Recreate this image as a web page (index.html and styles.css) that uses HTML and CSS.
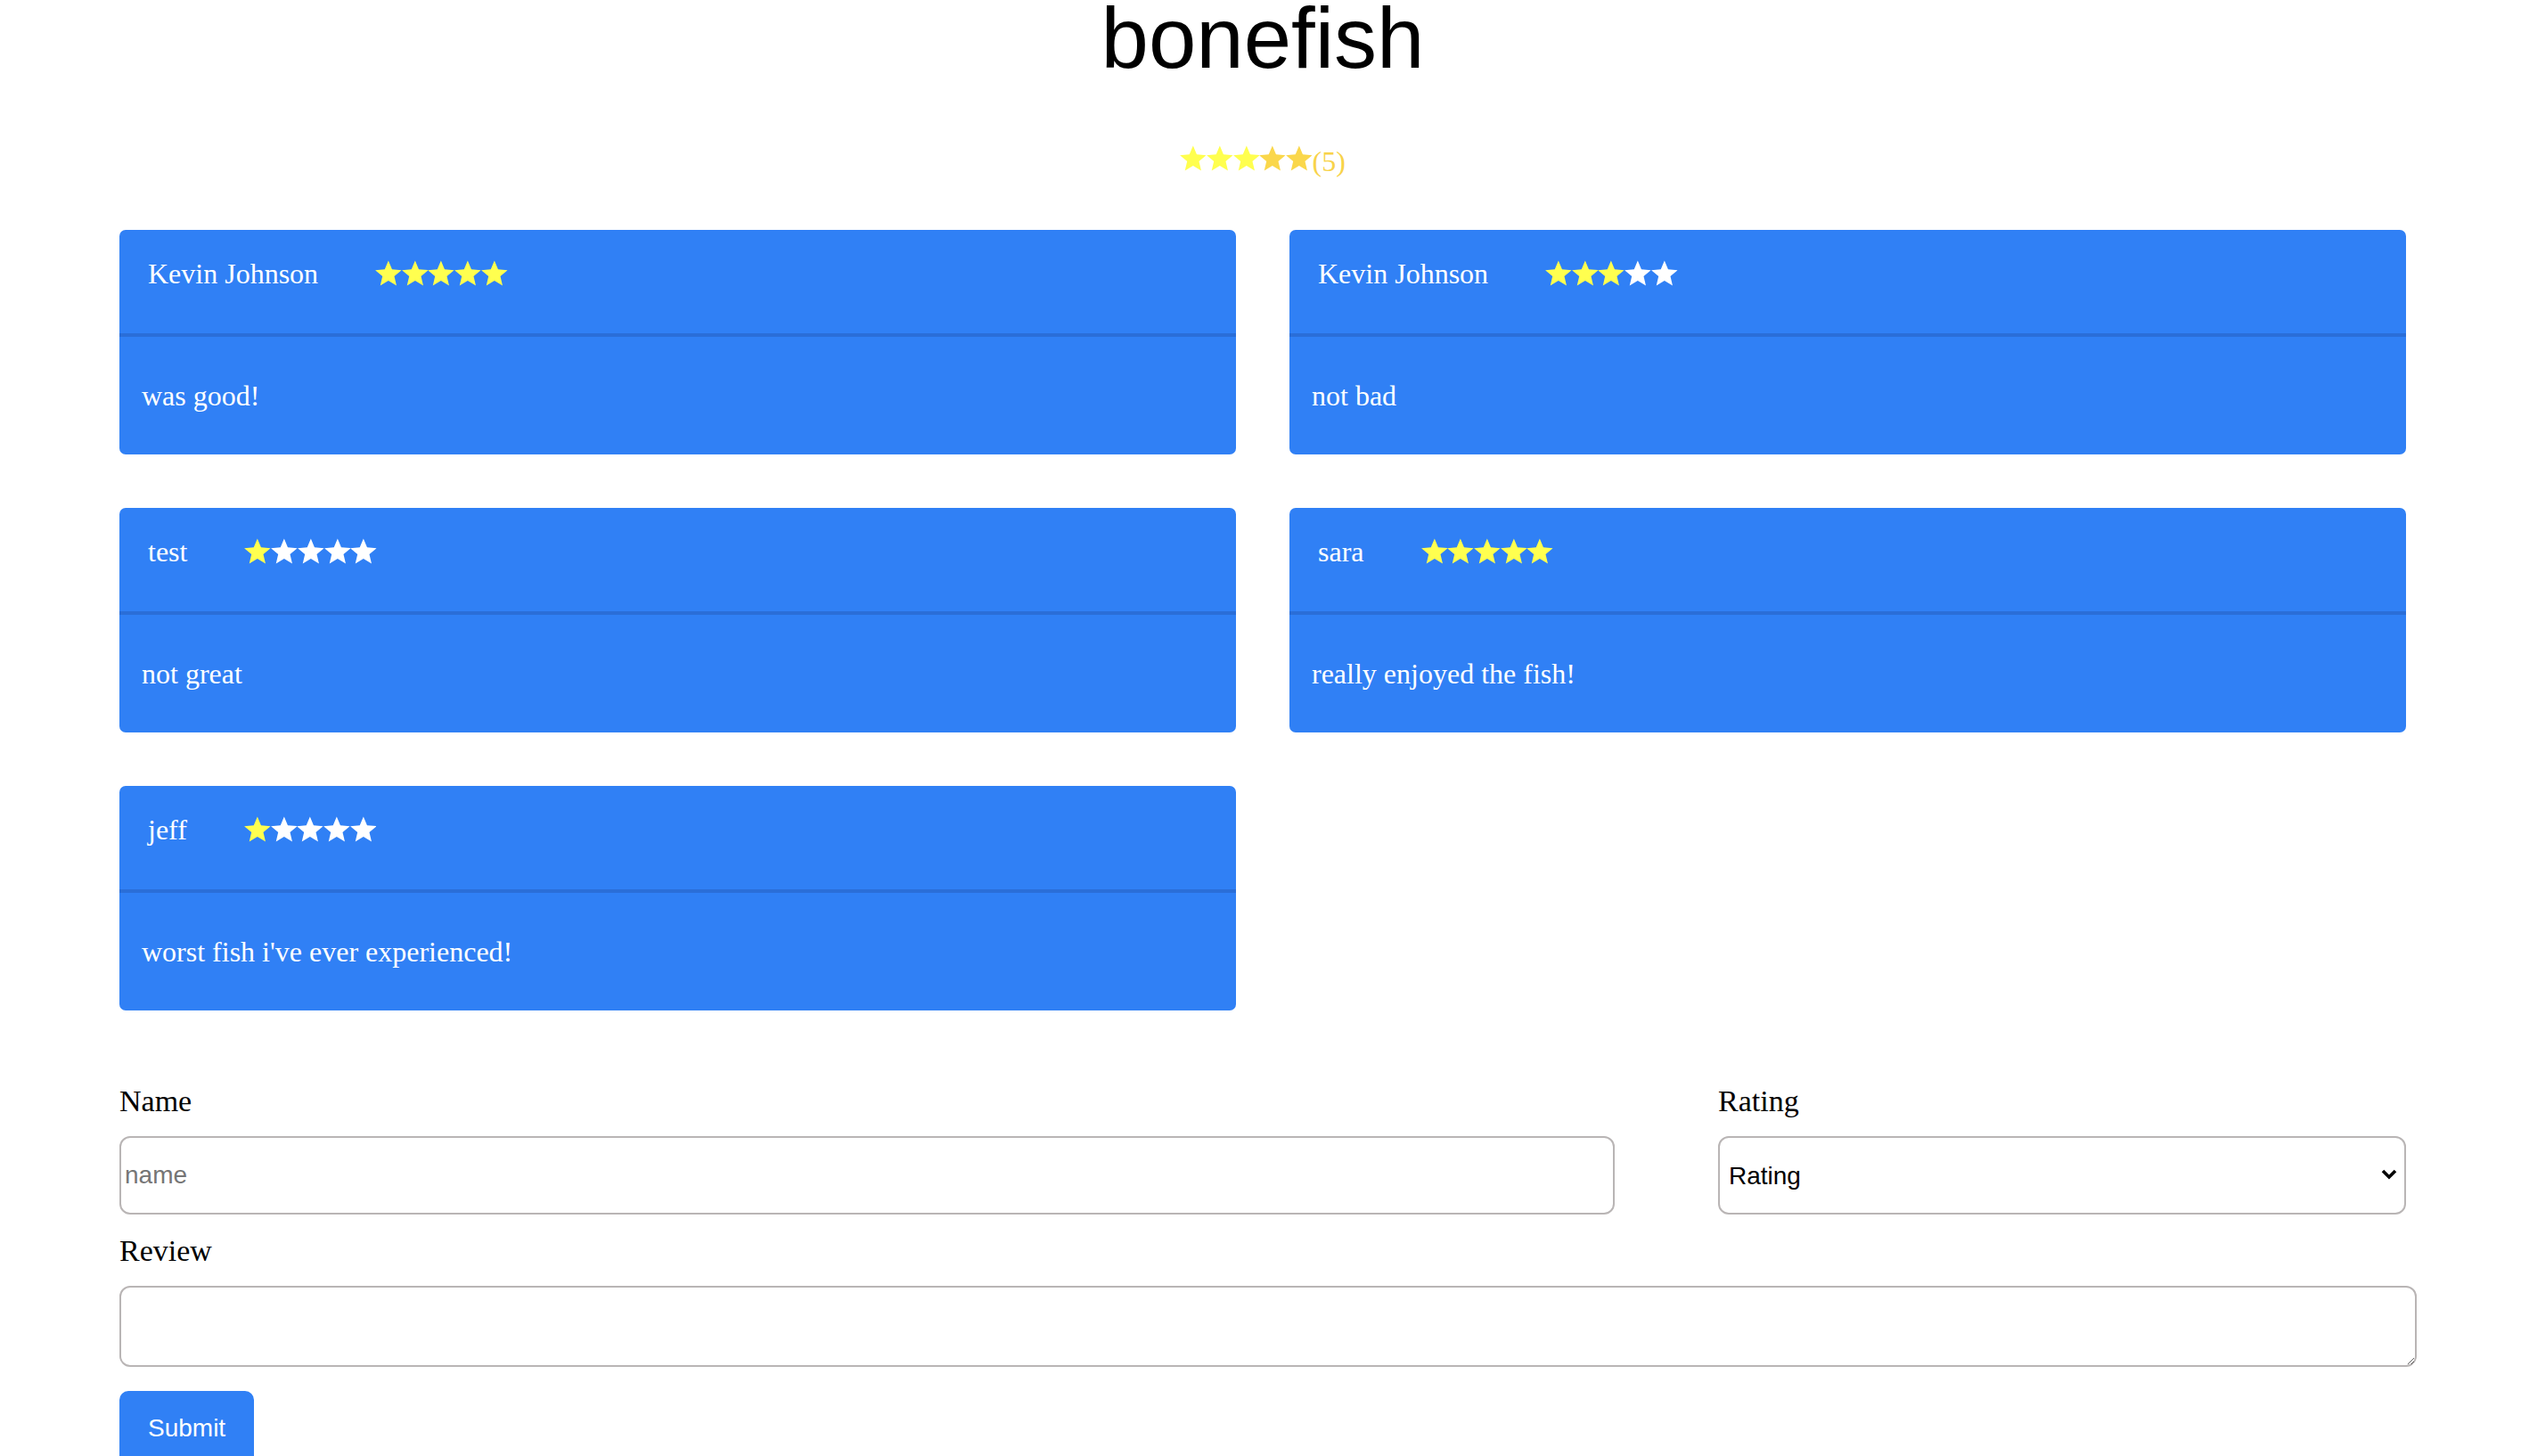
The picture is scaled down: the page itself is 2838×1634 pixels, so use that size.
FILE: index.html
```html
<!DOCTYPE html>
<html lang="en">
<head>
<meta charset="utf-8">
<title>bonefish</title>
<link rel="stylesheet" href="styles.css">
</head>
<body>
<svg class="defs" width="0" height="0" aria-hidden="true">
  <symbol id="star" viewBox="-0.3 0 30.6 29">
    <polygon points="15,0 19.23,10.18 30.22,11.06 21.85,18.22 24.4,28.94 15,23.2 5.6,28.94 8.15,18.22 -0.22,11.06 10.77,10.18"/>
  </symbol>
</svg>
<main class="page">
  <h1 class="title">bonefish</h1>
  <div class="summary">
    <span class="stars">
      <svg class="star star-on"><use href="#star"/></svg><svg class="star star-on"><use href="#star"/></svg><svg class="star star-on"><use href="#star"/></svg><svg class="star star-gold"><use href="#star"/></svg><svg class="star star-gold"><use href="#star"/></svg>
    </span>
    <span class="count">(5)</span>
  </div>

  <section class="cards">
    <article class="card">
      <header class="card-head">
        <span class="author">Kevin Johnson</span>
        <span class="stars"><svg class="star star-on"><use href="#star"/></svg><svg class="star star-on"><use href="#star"/></svg><svg class="star star-on"><use href="#star"/></svg><svg class="star star-on"><use href="#star"/></svg><svg class="star star-on"><use href="#star"/></svg></span>
      </header>
      <div class="card-body">was good!</div>
    </article>
    <article class="card">
      <header class="card-head">
        <span class="author">Kevin Johnson</span>
        <span class="stars"><svg class="star star-on"><use href="#star"/></svg><svg class="star star-on"><use href="#star"/></svg><svg class="star star-on"><use href="#star"/></svg><svg class="star star-off"><use href="#star"/></svg><svg class="star star-off"><use href="#star"/></svg></span>
      </header>
      <div class="card-body">not bad</div>
    </article>
    <article class="card">
      <header class="card-head">
        <span class="author">test</span>
        <span class="stars"><svg class="star star-on"><use href="#star"/></svg><svg class="star star-off"><use href="#star"/></svg><svg class="star star-off"><use href="#star"/></svg><svg class="star star-off"><use href="#star"/></svg><svg class="star star-off"><use href="#star"/></svg></span>
      </header>
      <div class="card-body">not great</div>
    </article>
    <article class="card">
      <header class="card-head">
        <span class="author">sara</span>
        <span class="stars"><svg class="star star-on"><use href="#star"/></svg><svg class="star star-on"><use href="#star"/></svg><svg class="star star-on"><use href="#star"/></svg><svg class="star star-on"><use href="#star"/></svg><svg class="star star-on"><use href="#star"/></svg></span>
      </header>
      <div class="card-body">really enjoyed the fish!</div>
    </article>
    <article class="card">
      <header class="card-head">
        <span class="author">jeff</span>
        <span class="stars"><svg class="star star-on"><use href="#star"/></svg><svg class="star star-off"><use href="#star"/></svg><svg class="star star-off"><use href="#star"/></svg><svg class="star star-off"><use href="#star"/></svg><svg class="star star-off"><use href="#star"/></svg></span>
      </header>
      <div class="card-body">worst fish i've ever experienced!</div>
    </article>
  </section>

  <form class="review-form">
    <div class="form-row">
      <div class="field">
        <label class="label" for="name">Name</label>
        <input class="input" id="name" type="text" placeholder="name">
      </div>
      <div class="field">
        <label class="label" for="rating">Rating</label>
        <div class="select-wrap">
          <select class="select" id="rating">
            <option>Rating</option>
            <option>1</option>
            <option>2</option>
            <option>3</option>
            <option>4</option>
            <option>5</option>
          </select>
          <svg class="chevron" viewBox="0 0 18 12" aria-hidden="true"><polyline points="2,2 9,9 16,2"/></svg>
        </div>
      </div>
    </div>
    <div class="field">
      <label class="label" for="review">Review</label>
      <textarea class="textarea" id="review"></textarea>
    </div>
    <button class="submit" type="submit">Submit</button>
  </form>
</main>
</body>
</html>
```

FILE: styles.css
```css
html, body {
  margin: 0;
  padding: 0;
  background: #ffffff;
}

body {
  overflow: hidden;
}

.defs {
  position: absolute;
  width: 0;
  height: 0;
}

.page {
  width: 2566px;
  margin-left: 134px;
  font-family: "Liberation Serif", "Times New Roman", serif;
}

.title {
  margin: 0;
  font-family: "Liberation Sans", Arial, sans-serif;
  font-weight: 400;
  font-size: 96px;
  line-height: 86px;
  text-align: center;
  color: #000;
}

.summary {
  display: flex;
  justify-content: center;
  align-items: flex-start;
  margin-top: 77px;
}

.stars {
  display: flex;
  align-items: flex-start;
}

.star {
  width: 29.7px;
  height: 29px;
  display: block;
}

.star-on { fill: #ffff4f; }
.star-gold { fill: #fad74b; }
.star-off { fill: #ffffff; }

.count {
  font-size: 32px;
  line-height: 37px;
  color: #f8d34a;
}

.cards {
  display: grid;
  grid-template-columns: 1fr 1fr;
  gap: 60px;
  margin-top: 58px;
}

.card {
  background: #3080f5;
  border-radius: 7px;
  color: #ffffff;
  overflow: hidden;
}

.card-head {
  box-sizing: border-box;
  height: 120px;
  padding: 31px 32px 0;
  display: flex;
  align-items: center;
  align-content: flex-start;
  flex-wrap: wrap;
  border-bottom: 4px solid #2a6ed8;
}

.card-head .stars {
  margin-left: 64px;
  margin-top: -3px;
}

.author {
  font-size: 32px;
  line-height: 37px;
}

.card-body {
  font-size: 32px;
  line-height: 37px;
  padding: 48px 25px 47px;
}

.review-form {
  margin-top: 82px;
}

.form-row {
  display: grid;
  grid-template-columns: 1678px 1fr;
  column-gap: 116px;
}

.field {
  display: flex;
  flex-direction: column;
}

.label {
  font-size: 34px;
  line-height: 39px;
  color: #000;
  margin-bottom: 20px;
}

.input,
.select,
.textarea {
  box-sizing: border-box;
  border: 2px solid #b9b5b5;
  border-radius: 12px;
  background: #fff;
  font-family: "Liberation Sans", Arial, sans-serif;
  font-size: 28px;
  color: #000;
  outline: none;
  margin: 0;
}

.input {
  height: 88px;
  padding: 0 4px;
}

.input::placeholder {
  color: #757575;
}

.select-wrap {
  position: relative;
}

.select {
  width: 100%;
  height: 88px;
  padding: 0 10px;
  appearance: none;
  -webkit-appearance: none;
}

.chevron {
  position: absolute;
  right: 10px;
  top: 37px;
  width: 18px;
  height: 12px;
  fill: none;
  stroke: #000;
  stroke-width: 3.6;
  pointer-events: none;
}

.form-row + .field {
  margin-top: 21px;
}

.textarea {
  box-sizing: content-box;
  width: 100%;
  height: 83px;
  padding: 2px 4px;
  resize: vertical;
}

.submit {
  margin-top: 27px;
  background: #3080f5;
  color: #fff;
  border: none;
  border-radius: 10px;
  font-family: "Liberation Sans", Arial, sans-serif;
  font-size: 28px;
  line-height: 32px;
  padding: 26px 32px;
}
```
